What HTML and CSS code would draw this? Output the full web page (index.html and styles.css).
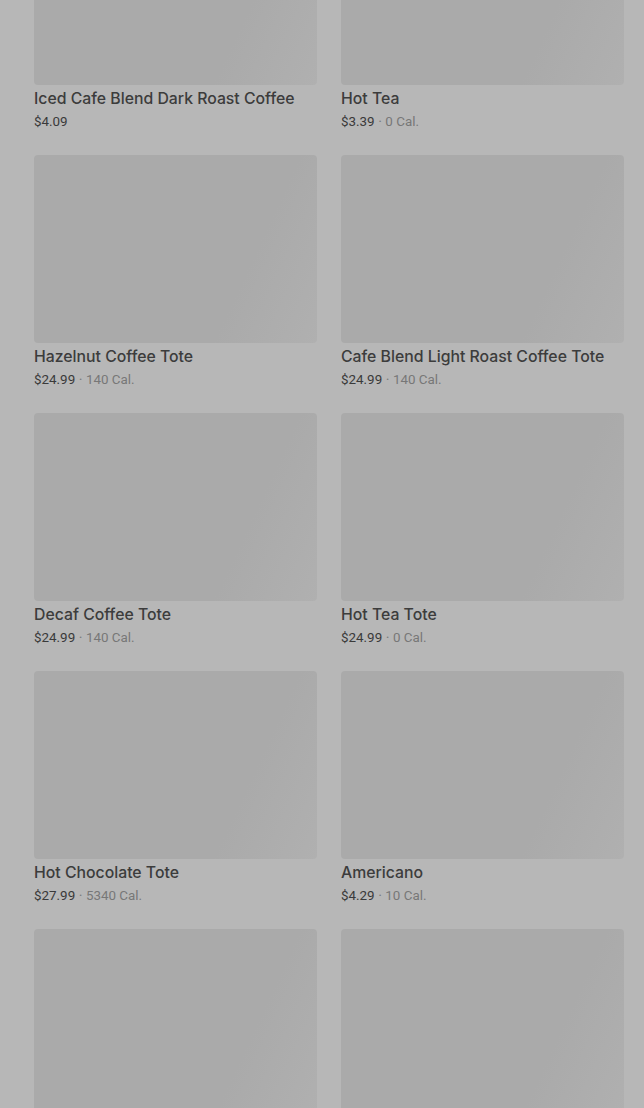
FILE: index.html
```html
<!DOCTYPE html>
<html>
<head>
<meta charset="utf-8">
<link rel="stylesheet" href="styles.css">
</head>
<body>
<main class="grid">
  <article class="card"><div class="thumb"></div><h3 class="name">Iced Cafe Blend Dark Roast Coffee</h3><p class="meta"><span class="price">$4.09</span></p></article>
  <article class="card"><div class="thumb"></div><h3 class="name">Hot Tea</h3><p class="meta"><span class="price">$3.39</span><span class="dot">•</span><span class="cal">0 Cal.</span></p></article>
  <article class="card"><div class="thumb"></div><h3 class="name">Hazelnut Coffee Tote</h3><p class="meta"><span class="price">$24.99</span><span class="dot">•</span><span class="cal">140 Cal.</span></p></article>
  <article class="card"><div class="thumb"></div><h3 class="name">Cafe Blend Light Roast Coffee Tote</h3><p class="meta"><span class="price">$24.99</span><span class="dot">•</span><span class="cal">140 Cal.</span></p></article>
  <article class="card"><div class="thumb"></div><h3 class="name">Decaf Coffee Tote</h3><p class="meta"><span class="price">$24.99</span><span class="dot">•</span><span class="cal">140 Cal.</span></p></article>
  <article class="card"><div class="thumb"></div><h3 class="name">Hot Tea Tote</h3><p class="meta"><span class="price">$24.99</span><span class="dot">•</span><span class="cal">0 Cal.</span></p></article>
  <article class="card"><div class="thumb"></div><h3 class="name">Hot Chocolate Tote</h3><p class="meta"><span class="price">$27.99</span><span class="dot">•</span><span class="cal">5340 Cal.</span></p></article>
  <article class="card"><div class="thumb"></div><h3 class="name">Americano</h3><p class="meta"><span class="price">$4.29</span><span class="dot">•</span><span class="cal">10 Cal.</span></p></article>
  <article class="card"><div class="thumb"></div><h3 class="name">&nbsp;</h3><p class="meta">&nbsp;</p></article>
  <article class="card"><div class="thumb"></div><h3 class="name">&nbsp;</h3><p class="meta">&nbsp;</p></article>
</main>
</body>
</html>
```
FILE: styles.css
```css
html, body {
  margin: 0;
  padding: 0;
  background: #b7b7b7;
  overflow: hidden;
}
body {
  font-family: Inter, Roboto, "Liberation Sans", sans-serif;
  color: #3a3a3a;
}
.grid {
  display: grid;
  grid-template-columns: 283px 283px;
  column-gap: 24px;
  row-gap: 24px;
  padding: 0 20px 0 34px;
  margin-top: -103px;
}
.card {
  display: flex;
  flex-direction: column;
}
.thumb {
  height: 188px;
  border-radius: 4px;
  background: linear-gradient(115deg, #aaaaaa 0%, #aaaaaa 72%, #b0b0b0 100%);
}
.name {
  margin: 4px 0 0;
  font-size: 15.8px;
  line-height: 20px;
  font-weight: 500;
  color: #3c3c3c;
  white-space: nowrap;
}
.meta {
  margin: 4px 0 0;
  font-size: 13.4px;
  line-height: 18px;
  display: flex;
  align-items: center;
  font-family: Roboto, "Liberation Sans", sans-serif;
}
.price {
  color: #3a3a3a;
}
.dot {
  color: #7a7a7a;
  font-size: 8px;
  margin: 0 4px;
}
.cal {
  color: #777777;
}
```
